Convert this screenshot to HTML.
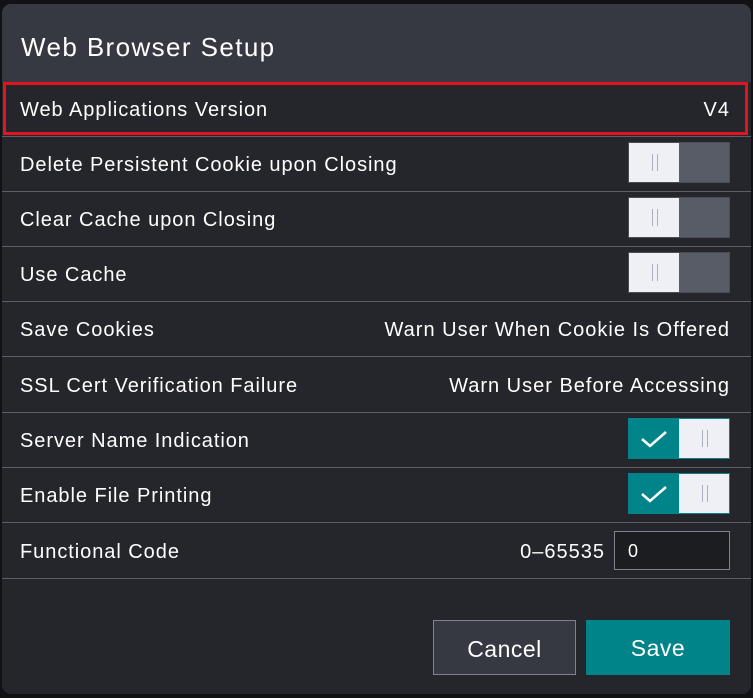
<!DOCTYPE html>
<html><head><style>
body{margin:0;width:753px;height:698px;background:#111214;overflow:hidden;font-family:"Liberation Sans",sans-serif;color:#fff}
.dlg{position:absolute;left:2px;top:4px;width:749px;height:690px;background:#25262b;border-radius:9px;overflow:hidden}
.hdr{position:absolute;left:0;top:0;width:100%;height:78px;background:#363942}
.t{position:absolute;left:19px;top:28px;font-size:26px;letter-spacing:1.4px}
.row{position:absolute;left:0;width:749px;height:55px;border-bottom:1px solid #5c5f69;box-sizing:border-box}
.row .l{position:absolute;left:18px;top:17px;font-size:20px;letter-spacing:0.95px}
.row .r{position:absolute;right:21px;top:17px;font-size:20px;letter-spacing:1px}
.red{position:absolute;left:1px;top:78px;width:745px;height:53px;border:3px solid #e3141f;box-sizing:border-box}
.tg{position:absolute;left:626px;top:5px;width:102px;height:41px;background:#585c66;box-sizing:border-box;border:1px solid #4a4d56}
.tg .k{position:absolute;left:0;top:0;width:50px;height:39px;background:#eef0f5}
.tg .k:before{content:"";position:absolute;left:23px;top:11px;width:4px;height:17px;border-left:1px solid #a9b0c0;border-right:1px solid #a9b0c0}
.tg.on{background:#00848a;border-color:#00848a}
.tg.on .k{left:50px}
.inp{position:absolute;left:612px;top:7px;width:116px;height:39px;border:1px solid #80838d;background:#1c1d21;box-sizing:border-box;font-size:18px;padding:9px 0 0 13px}
.btn{position:absolute;top:616px;height:55px;font-size:23px;text-align:center;line-height:57px;box-sizing:border-box;letter-spacing:0.5px}
</style></head><body>
<div class="dlg">
<div class="hdr"><div class="t">Web Browser Setup</div></div>
<div class="row" style="top:78px"><div class="l">Web Applications Version</div><div class="r">V4</div></div>
<div class="red"></div>
<div class="row" style="top:133px"><div class="l">Delete Persistent Cookie upon Closing</div><div class="tg"><div class="k"></div></div></div>
<div class="row" style="top:188px"><div class="l">Clear Cache upon Closing</div><div class="tg"><div class="k"></div></div></div>
<div class="row" style="top:243px"><div class="l">Use Cache</div><div class="tg"><div class="k"></div></div></div>
<div class="row" style="top:298px"><div class="l">Save Cookies</div><div class="r">Warn User When Cookie Is Offered</div></div>
<div class="row" style="top:354px"><div class="l">SSL Cert Verification Failure</div><div class="r">Warn User Before Accessing</div></div>
<div class="row" style="top:409px"><div class="l">Server Name Indication</div><div class="tg on"><svg style="position:absolute;left:11px;top:10px" width="28" height="20"><path d="M2 10 L10 17 L26 3" stroke="#fff" stroke-width="2.5" fill="none"/></svg><div class="k"></div></div></div>
<div class="row" style="top:464px"><div class="l">Enable File Printing</div><div class="tg on"><svg style="position:absolute;left:11px;top:10px" width="28" height="20"><path d="M2 10 L10 17 L26 3" stroke="#fff" stroke-width="2.5" fill="none"/></svg><div class="k"></div></div></div>
<div class="row" style="top:520px"><div class="l">Functional Code</div><div class="r" style="right:146px">0–65535</div><div class="inp">0</div></div>
<div class="btn" style="left:431px;width:143px;background:#363942;border:1px solid #80838d">Cancel</div>
<div class="btn" style="left:584px;width:144px;background:#00848a">Save</div>
</div>
</body></html>
